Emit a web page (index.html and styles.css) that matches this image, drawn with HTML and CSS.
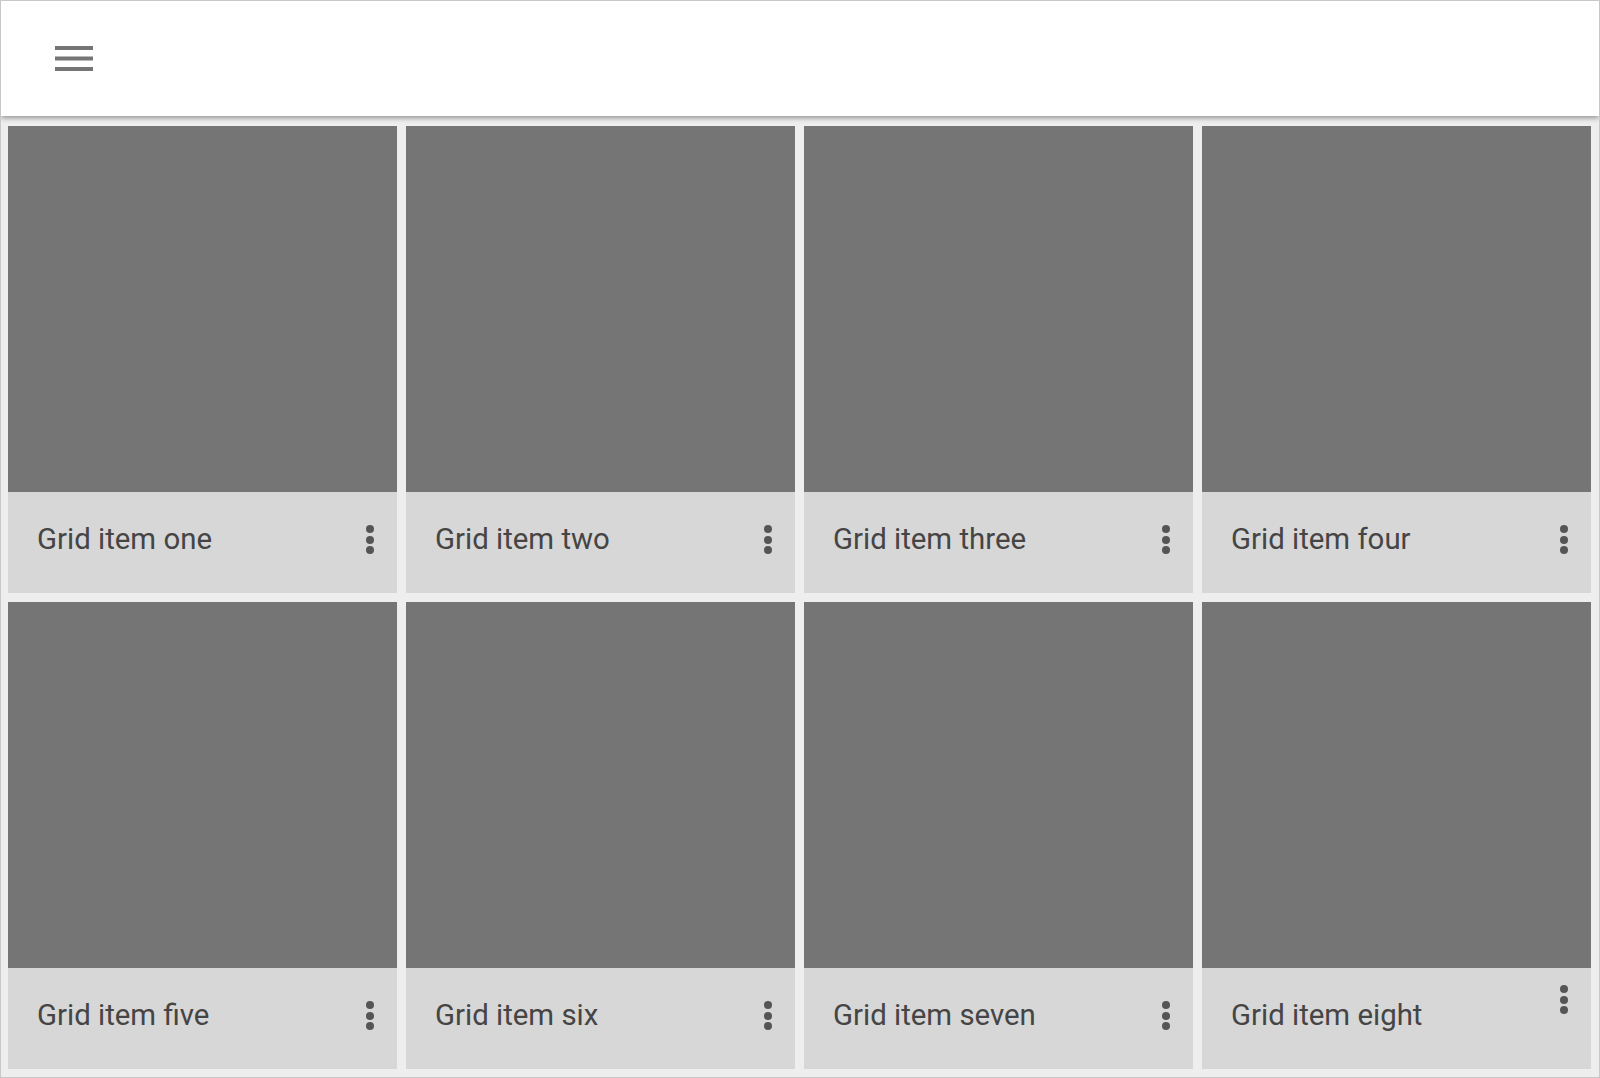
FILE: index.html
```html
<!DOCTYPE html>
<html>
<head>
<meta charset="utf-8">
<link rel="stylesheet" href="styles.css">
</head>
<body>
<div class="page">
  <header class="topbar">
    <svg class="menu" width="38" height="25" viewBox="0 0 38 25"><rect x="0" y="0" width="38" height="4" fill="#757575"/><rect x="0" y="10.5" width="38" height="4" fill="#757575"/><rect x="0" y="21" width="38" height="4" fill="#757575"/></svg>
  </header>
  <main class="grid">
    <div class="tile"><div class="img"></div><div class="cap"><span class="label">Grid item one</span><span class="dots"><i></i><i></i><i></i></span></div></div>
    <div class="tile"><div class="img"></div><div class="cap"><span class="label">Grid item two</span><span class="dots"><i></i><i></i><i></i></span></div></div>
    <div class="tile"><div class="img"></div><div class="cap"><span class="label">Grid item three</span><span class="dots"><i></i><i></i><i></i></span></div></div>
    <div class="tile"><div class="img"></div><div class="cap"><span class="label">Grid item four</span><span class="dots"><i></i><i></i><i></i></span></div></div>
    <div class="tile"><div class="img"></div><div class="cap"><span class="label">Grid item five</span><span class="dots"><i></i><i></i><i></i></span></div></div>
    <div class="tile"><div class="img"></div><div class="cap"><span class="label">Grid item six</span><span class="dots"><i></i><i></i><i></i></span></div></div>
    <div class="tile"><div class="img"></div><div class="cap"><span class="label">Grid item seven</span><span class="dots"><i></i><i></i><i></i></span></div></div>
    <div class="tile"><div class="img"></div><div class="cap"><span class="label">Grid item eight</span><span class="dots dots-up"><i></i><i></i><i></i></span></div></div>
  </main>
</div>
</body>
</html>
```
FILE: styles.css
```css
html, body {
  margin: 0;
  padding: 0;
  background: #ffffff;
}
.page {
  width: 1600px;
  height: 1078px;
  box-sizing: border-box;
  border: 1px solid #c8c8c8;
  background: #eeeeee;
  display: flex;
  flex-direction: column;
  overflow: hidden;
  font-family: Roboto, "Liberation Sans", sans-serif;
}
.topbar {
  height: 115px;
  flex: 0 0 115px;
  background: #ffffff;
  box-shadow: 0 2px 5px rgba(0, 0, 0, 0.38);
  position: relative;
  z-index: 1;
  display: flex;
  align-items: flex-start;
  padding: 45px 0 0 54px;
  box-sizing: border-box;
}
.menu {
  display: block;
}
.grid {
  flex: 1;
  display: grid;
  grid-template-columns: repeat(4, 389px);
  grid-template-rows: repeat(2, 467px);
  gap: 9px;
  padding: 10px 8px 8px 7px;
}
.tile {
  display: flex;
  flex-direction: column;
}
.img {
  height: 366px;
  background: #757575;
}
.cap {
  flex: 1;
  background: #d7d7d7;
  position: relative;
  display: flex;
  align-items: center;
  padding-left: 29px;
  padding-bottom: 8px;
  box-sizing: border-box;
}
.label {
  font-size: 29.4px;
  color: #454545;
}
.dots {
  position: absolute;
  right: 23px;
  top: 33px;
  display: flex;
  flex-direction: column;
  gap: 2.5px;
}
.dots i {
  display: block;
  width: 8px;
  height: 8px;
  border-radius: 50%;
  background: #555555;
}
.dots-up {
  top: 17px;
}
```
